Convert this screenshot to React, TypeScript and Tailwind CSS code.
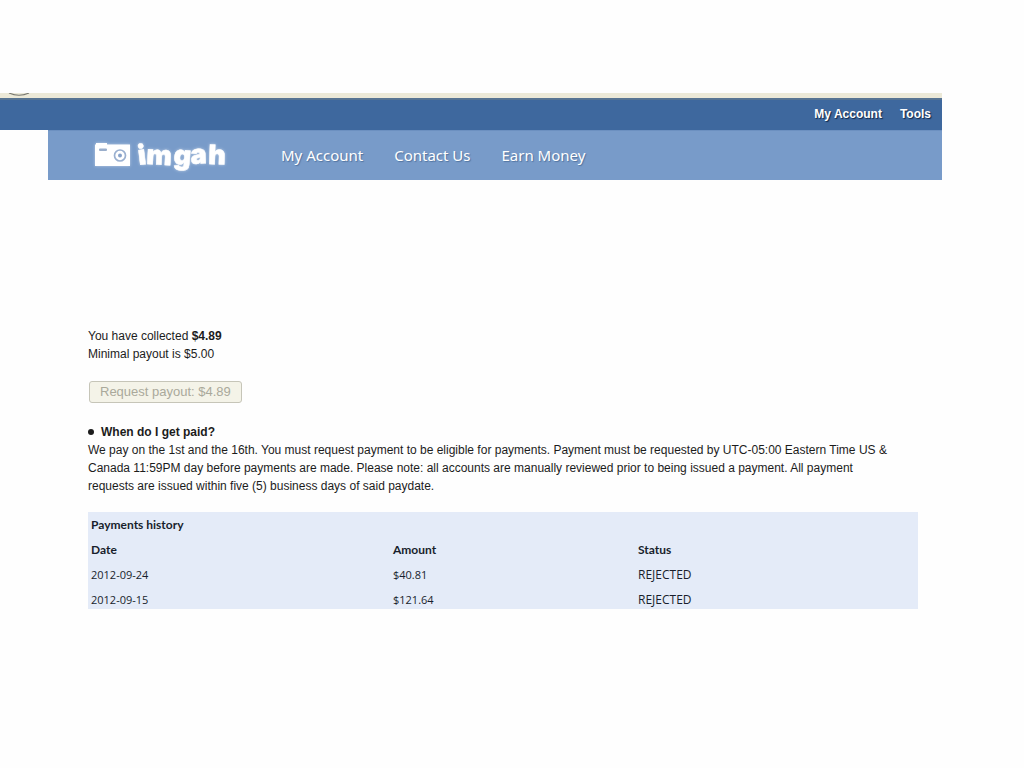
import React from "react";

const payments = [
  { date: "2012-09-24", amount: "$40.81", status: "REJECTED" },
  { date: "2012-09-15", amount: "$121.64", status: "REJECTED" },
];

const navItems = ["My Account", "Contact Us", "Earn Money"];

function Logo() {
  return (
    <a href="#" className="flex items-center" aria-label="imgah">
      <svg width="140" height="38" viewBox="0 0 140 38" className="overflow-visible">
        <defs>
          <filter id="glow" x="-20%" y="-40%" width="140%" height="180%">
            <feGaussianBlur in="SourceGraphic" stdDeviation="1.5" result="blur" />
            <feComponentTransfer in="blur" result="soft">
              <feFuncA type="linear" slope="0.5" />
            </feComponentTransfer>
            <feMerge>
              <feMergeNode in="soft" />
              <feMergeNode in="SourceGraphic" />
            </feMerge>
          </filter>
        </defs>
        <g filter="url(#glow)" fill="#ffffff">
          <path d="M5 7.500h1V6h11v1.500h23V29H5z" />
          <text
            x="49 56 83 101 118"
            y="28 27 27 27 27"
            rotate="-7 3 5 -3 2"
            fontSize="27"
            fontWeight="900"
            stroke="#ffffff"
            strokeWidth="0.5"
            className="font-['Inter',Arial,sans-serif]"
          >
            imgah
          </text>
        </g>
        <rect x="9" y="11.500" width="8" height="2.500" rx="1" fill="#9aaecb" />
        <circle cx="30" cy="18.500" r="5.500" fill="none" stroke="#9ab0d0" strokeWidth="1.700" />
        <circle cx="30" cy="18.500" r="2" fill="#87a2ca" />
      </svg>
    </a>
  );
}

export default function App() {
  return (
    <div className="min-h-screen bg-[#fefefe] pt-[93px] pr-[82px] font-['Liberation_Sans',Arial,sans-serif] text-xs text-[#1c1c1c]">
      <header>
        <div className="h-[5px] overflow-hidden bg-[#ece9d8] pl-[7px]">
          <svg width="24" height="3" viewBox="0 0 24 3" className="block">
            <path d="M2 0Q12 4.500 22 0" fill="none" stroke="#77776f" strokeWidth="1.200" />
          </svg>
        </div>
        <nav className="flex h-8 items-center justify-end gap-[18px] border-t-2 border-[#577493] bg-[#3e689e] pr-[11px] pb-0.5 font-bold text-white [text-shadow:1px_1px_1px_#10284a]">
          <a href="#">My Account</a>
          <a href="#">Tools</a>
        </nav>
        <div className="ml-12 flex h-[50px] items-center border-t border-[#6c90c0] bg-[#789bc9] pl-[42px]">
          <Logo />
          <nav className="ml-[51px] flex gap-[31px] pb-0.5 font-['Noto_Sans',sans-serif] text-[15px] leading-5 text-white [text-shadow:1px_1px_1px_#52749f]">
            {navItems.map((item) => (
              <a key={item} href="#">
                {item}
              </a>
            ))}
          </nav>
        </div>
      </header>

      <main className="mt-[147px] mr-6 ml-[88px] leading-[18px]">
        <p>
          You have collected <b>$4.89</b>
        </p>
        <p>Minimal payout is $5.00</p>
        <button
          type="button"
          disabled
          className="mt-[18px] ml-px block h-[22px] rounded-[3px] border border-[#c6c5b8] bg-[#f4f3e8] px-[10px] text-[13px] leading-5 text-[#aaa99b]"
        >
          Request payout: $4.89
        </button>

        <section className="mt-5">
          <h2 className="flex items-center gap-[7px] font-bold">
            <span className="size-[6px] rounded-full bg-[#1c1c1c]" />
            When do I get paid?
          </h2>
          <p>
            We pay on the 1st and the 16th. You must request payment to be eligible for payments. Payment must be requested by UTC-05:00 Eastern Time US &amp;
            <br />
            Canada 11:59PM day before payments are made. Please note: all accounts are manually reviewed prior to being issued a payment. All payment
            <br />
            requests are issued within five (5) business days of said paydate.
          </p>
        </section>

        <table className="mt-[17px] w-full table-fixed border-collapse bg-[#e4ebf8] text-left font-['Open_Sans',sans-serif] text-[#181e2c]">
          <caption className="bg-[#e4ebf8] px-[3px] pt-1 pb-[3px] text-left font-['Lato',sans-serif] font-bold">
            Payments history
          </caption>
          <colgroup>
            <col className="w-[302px]" />
            <col className="w-[245px]" />
            <col />
          </colgroup>
          <thead className="font-['Lato',sans-serif]">
            <tr>
              <th className="px-[3px] pt-1 pb-[3px]">Date</th>
              <th className="px-[3px] pt-1 pb-[3px]">Amount</th>
              <th className="px-[3px] pt-1 pb-[3px]">Status</th>
            </tr>
          </thead>
          <tbody>
            {payments.map((payment) => (
              <tr key={payment.date} className="[&>td]:px-[3px] [&>td]:pt-1 [&>td]:pb-[3px] last:[&>td]:pb-0">
                <td className="text-[11px]">{payment.date}</td>
                <td className="text-[11px]">{payment.amount}</td>
                <td>{payment.status}</td>
              </tr>
            ))}
          </tbody>
        </table>
      </main>
    </div>
  );
}
